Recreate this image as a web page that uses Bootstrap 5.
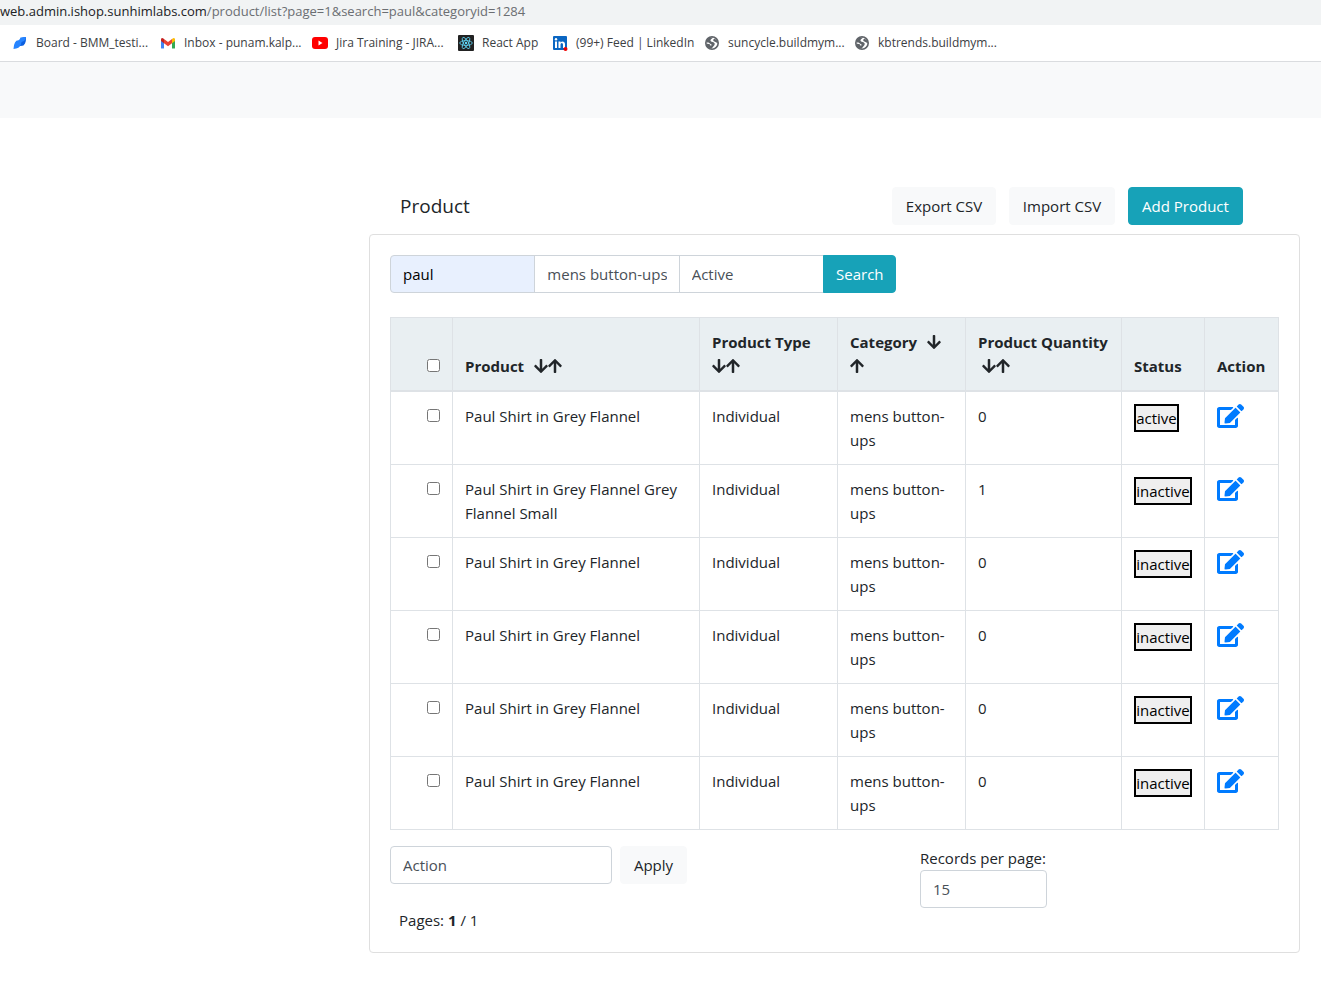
<!DOCTYPE html>
<html lang="en">
<head>
<meta charset="utf-8">
<meta name="viewport" content="width=device-width, initial-scale=1">
<title>Product list</title>
<link rel="stylesheet" href="https://cdn.jsdelivr.net/npm/bootstrap@5.3.0/dist/css/bootstrap.min.css">
<style>
body{font-family:"Open Sans","Noto Sans",sans-serif;font-size:15px;line-height:24px;color:#212529;background:#fff}
.address-bar{background:#f1f3f4;height:25px;font-size:13px;line-height:22px;color:#6b6e72;white-space:nowrap}
.address-bar span{color:#202124}
.bookmarks{display:grid;grid-template-columns:148px 152px 146px 94px 152px 150px 150px;height:37px;padding-left:12px;border-bottom:1px solid #dadcdf;align-items:center}
.bookmarks a{display:flex;align-items:center;gap:8px;color:#3c4043;font-size:12px;line-height:16px;text-decoration:none;white-space:nowrap}
.bookmarks svg{flex:none;width:16px;height:16px}
.top-strip{height:56px;background:#f8f9fa}
.shell{display:grid;grid-template-columns:28% minmax(0,1fr);padding:69px 21px 28px 7px}
.heading-row{padding:0 57px 9px 31px}
.heading-row h1{font-size:19px;line-height:24px;font-weight:400;margin:0}
.heading-tools{gap:13px}
.btn{font-size:15px;line-height:24px;height:38px;padding:6px 12px;border-radius:4px}
.btn-plain{background:#f8f9fa;border-color:#f8f9fa;color:#212529}
.btn-teal{background:#17a2b8;border-color:#17a2b8;color:#fff}
.btn-export{min-width:104px}.btn-import{min-width:106px}.btn-add{min-width:115px}
.panel{border:1px solid #dfdfdf;border-radius:4px;padding:20px}
.form-control{font-size:15px;line-height:24px;height:38px;padding:6px 12px;border-color:#ced4da;border-radius:4px;color:#495057}
.filters{max-width:506px;margin-bottom:24px}
.filters .btn{width:73px}
.filled,.filled:focus{background:#e8f0fe;color:#000}
.product-grid{table-layout:fixed;margin-bottom:16px;border-color:#dee2e6;color:#212529}
.product-grid th,.product-grid td{padding:12px;border:1px solid #dee2e6}
.product-grid thead th{background:#e9eff2;vertical-align:bottom;border-bottom:2px solid #dee2e6;font-weight:700;font-size:15px;white-space:nowrap}
.product-grid .tick{text-align:right}
.tick input{width:13px;height:13px;margin:0;vertical-align:0;display:inline-block}
.c-tick{width:62px}.c-type{width:138px}.c-cat{width:128px}.c-qty{width:156px}.c-status{width:83px}.c-action{width:74px}
.arrow{width:14px;height:16px;fill:currentColor;vertical-align:-2px;display:inline-block}
.arrow-after{margin-left:2px}
.state{border:2px solid #000;background:#efefef;color:#000;padding:0;height:28px;line-height:24px;width:58px;display:block;text-align:center;white-space:nowrap}
.state-on{width:45px}
.edit svg{display:block;width:27px;height:24px;fill:#007bff}
.bulk{gap:8px}
.bulk select{width:222px}
.bulk .btn{min-width:67px}
.records{width:127px;margin-right:232px;white-space:nowrap}
.pages{padding-left:9px}
</style>
<script src="https://cdn.jsdelivr.net/npm/bootstrap@5.3.0/dist/js/bootstrap.bundle.min.js"></script>
</head>
<body>
<svg class="d-none" aria-hidden="true">
<symbol id="down" viewBox="0 0 448 512"><path d="M413.1 222.5l22.2 22.2c9.4 9.4 9.4 24.6 0 33.9L241 473c-9.4 9.4-24.6 9.4-33.9 0L12.7 278.6c-9.4-9.4-9.4-24.6 0-33.9l22.2-22.2c9.5-9.5 25-9.3 34.3.4L184 343.4V56c0-13.3 10.7-24 24-24h32c13.3 0 24 10.7 24 24v287.4l114.8-120.5c9.3-9.8 24.8-10 34.3-.4z"/></symbol>
<symbol id="up" viewBox="0 0 448 512"><path d="M34.9 289.5l-22.2-22.2c-9.4-9.4-9.4-24.6 0-33.9L207 39c9.4-9.4 24.6-9.4 33.9 0l194.3 194.3c9.4 9.4 9.4 24.6 0 33.9L413 289.4c-9.5 9.5-25 9.3-34.3-.4L264 168.6V456c0 13.3-10.7 24-24 24h-32c-13.3 0-24-10.7-24-24V168.6L69.2 289.1c-9.3 9.8-24.8 10-34.3.4z"/></symbol>
<symbol id="edit" viewBox="0 0 576 512"><path d="M402.6 83.2l90.2 90.2c3.8 3.8 3.8 10 0 13.8L274.4 405.6l-92.8 10.3c-12.4 1.4-22.9-9.1-21.5-21.5l10.3-92.8L388.8 83.2c3.8-3.8 10-3.8 13.8 0zm162-22.9l-48.8-48.8c-15.2-15.2-39.9-15.2-55.2 0l-35.4 35.4c-3.8 3.8-3.8 10 0 13.8l90.2 90.2c3.8 3.8 10 3.8 13.8 0l35.4-35.4c15.2-15.3 15.2-40 0-55.2zM384 346.2V448H64V128h229.8c3.2 0 6.2-1.3 8.500-3.500l40-40c7.600-7.600 2.200-20.500-8.500-20.500H48C21.500 64 0 85.500 0 112v352c0 26.500 21.500 48 48 48h352c26.500 0 48-21.500 48-48V306.200c0-10.700-12.900-16-20.500-8.500l-40 40c-2.200 2.300-3.500 5.300-3.500 8.500z"/></symbol>
<symbol id="globe" viewBox="0 0 16 16"><circle cx="8" cy="8" r="6.200" fill="#fff" stroke="#5f6368" stroke-width="1.600"/><path d="M9.500 2.200L6.800 4.500Q6 5.500 7 6.500L9.500 7.300Q11.500 8.200 10.500 10L7.500 13.800Q2.200 13.500 2.200 8.600L5.800 9.200 6.500 10.800 8 10 4.500 7.500 2.200 7.500Q2.500 2 9.500 2.200zM10.500 3.500L13.800 6V8.500L12 7.200 9.800 6.200 9 5z" fill="#5f6368"/></symbol>
</svg>
<header>
<div class="address-bar"><div><span>web.admin.ishop.sunhimlabs.com</span>/product/list?page=1&amp;search=paul&amp;categoryid=1284</div></div>
<nav class="bookmarks" aria-label="Bookmarks">
<a href="#"><svg viewBox="0 0 16 16"><path d="M8 5.500Q8.500 2 14 2q.2 4-1 6.500Q12 11.300 8 11z" fill="#0c5fe0"/><path d="M1.500 14q0-4 1.500-6.500Q4 5.300 6.500 5.200 8 5 8.500 2.600 10 2 14 2 13.500 6 10 6.800 9 7.500 9 9.500 7.500 13.500 1.500 14z" fill="#2684ff"/></svg>Board - BMM_testi...</a>
<a href="#"><svg viewBox="0 0 16 16"><path d="M1 4v9q0 .5.500.5H4V6z" fill="#4285f4"/><path d="M12 6v7.500h2.500q.5 0 .5-.5V4z" fill="#34a853"/><path d="M12 4l1-.8q2-1 2 1.300V6l-3 2.200z" fill="#fbbc04"/><path d="M4 4L3 3.200q-2-1-2 1.300V6l3 2.200z" fill="#c5221f"/><path d="M4 4l4 3 4-3v4.200l-4 3-4-3z" fill="#ea4335"/></svg>Inbox - punam.kalp...</a>
<a href="#"><svg viewBox="0 0 16 16"><rect y="2" width="16" height="12" rx="3" fill="#f00"/><path d="M6.500 5.500v5l4-2.500z" fill="#fff"/></svg>Jira Training - JIRA...</a>
<a href="#"><svg viewBox="0 0 16 16"><rect width="16" height="16" rx="1" fill="#222"/><g fill="none" stroke="#61dafb" stroke-width=".8"><ellipse cx="8" cy="8" rx="6.300" ry="2.400"/><ellipse cx="8" cy="8" rx="6.300" ry="2.400" transform="rotate(60 8 8)"/><ellipse cx="8" cy="8" rx="6.300" ry="2.400" transform="rotate(120 8 8)"/></g><circle cx="8" cy="8" r="1.200" fill="#61dafb"/></svg>React App</a>
<a href="#"><svg viewBox="0 0 16 16"><rect x="1" y="1" width="14" height="14" rx="1" fill="#0a66c2"/><path d="M3 6.500h2V13H3zM6.500 6.500h2v1q2-2 4 0 .5.700.5 2V13h-2V9.500q0-1.500-1.200-1.500T8.500 9.500V13h-2z" fill="#fff"/><circle cx="4" cy="4.300" r="1.200" fill="#fff"/><circle cx="13.500" cy="14" r="2" fill="#e00"/></svg>(99+) Feed | LinkedIn</a>
<a href="#"><svg><use href="#globe"/></svg>suncycle.buildmym...</a>
<a href="#"><svg><use href="#globe"/></svg>kbtrends.buildmym...</a>
</nav>
<div class="top-strip"></div>
</header>
<div class="shell">
<aside></aside>
<main>
<div class="heading-row d-flex align-items-center justify-content-between">
<h1>Product</h1>
<div class="heading-tools d-flex">
<button type="button" class="btn btn-plain btn-export">Export CSV</button>
<button type="button" class="btn btn-plain btn-import">Import CSV</button>
<button type="button" class="btn btn-teal btn-add">Add Product</button>
</div>
</div>
<section class="panel">
<form class="filters input-group flex-nowrap">
<input class="form-control filled" type="text" value="paul" aria-label="Search text">
<select class="form-control" aria-label="Category"><option>mens button-ups</option></select>
<select class="form-control" aria-label="Status"><option>Active</option></select>
<button type="button" class="btn btn-teal">Search</button>
</form>
<table class="table product-grid">
<colgroup><col class="c-tick"><col><col class="c-type"><col class="c-cat"><col class="c-qty"><col class="c-status"><col class="c-action"></colgroup>
<thead><tr>
<th class="tick"><input type="checkbox" aria-label="Select all"></th>
<th>Product&nbsp; <svg class="arrow arrow-after"><use href="#down"/></svg><svg class="arrow"><use href="#up"/></svg></th>
<th>Product Type<br><svg class="arrow"><use href="#down"/></svg><svg class="arrow"><use href="#up"/></svg></th>
<th>Category&nbsp; <svg class="arrow arrow-after"><use href="#down"/></svg><br><svg class="arrow"><use href="#up"/></svg></th>
<th>Product Quantity<br>&nbsp;<svg class="arrow"><use href="#down"/></svg><svg class="arrow"><use href="#up"/></svg></th>
<th>Status</th><th>Action</th>
</tr></thead>
<tbody>
<tr><td class="tick"><input type="checkbox" aria-label="Select row 1"></td><td>Paul Shirt in Grey Flannel</td><td>Individual</td><td>mens button-<br>ups</td><td>0</td><td><button type="button" class="state state-on">active</button></td><td><a class="edit" href="#" aria-label="Edit"><svg><use href="#edit"/></svg></a></td></tr>
<tr><td class="tick"><input type="checkbox" aria-label="Select row 2"></td><td>Paul Shirt in Grey Flannel Grey Flannel Small</td><td>Individual</td><td>mens button-<br>ups</td><td>1</td><td><button type="button" class="state">inactive</button></td><td><a class="edit" href="#" aria-label="Edit"><svg><use href="#edit"/></svg></a></td></tr>
<tr><td class="tick"><input type="checkbox" aria-label="Select row 3"></td><td>Paul Shirt in Grey Flannel</td><td>Individual</td><td>mens button-<br>ups</td><td>0</td><td><button type="button" class="state">inactive</button></td><td><a class="edit" href="#" aria-label="Edit"><svg><use href="#edit"/></svg></a></td></tr>
<tr><td class="tick"><input type="checkbox" aria-label="Select row 4"></td><td>Paul Shirt in Grey Flannel</td><td>Individual</td><td>mens button-<br>ups</td><td>0</td><td><button type="button" class="state">inactive</button></td><td><a class="edit" href="#" aria-label="Edit"><svg><use href="#edit"/></svg></a></td></tr>
<tr><td class="tick"><input type="checkbox" aria-label="Select row 5"></td><td>Paul Shirt in Grey Flannel</td><td>Individual</td><td>mens button-<br>ups</td><td>0</td><td><button type="button" class="state">inactive</button></td><td><a class="edit" href="#" aria-label="Edit"><svg><use href="#edit"/></svg></a></td></tr>
<tr><td class="tick"><input type="checkbox" aria-label="Select row 6"></td><td>Paul Shirt in Grey Flannel</td><td>Individual</td><td>mens button-<br>ups</td><td>0</td><td><button type="button" class="state">inactive</button></td><td><a class="edit" href="#" aria-label="Edit"><svg><use href="#edit"/></svg></a></td></tr>
</tbody>
</table>
<div class="d-flex justify-content-between align-items-start">
<form class="bulk d-flex">
<select class="form-control" aria-label="Bulk action"><option>Action</option></select>
<button type="button" class="btn btn-plain">Apply</button>
</form>
<div class="records">
<label for="perPage">Records per page:</label>
<select id="perPage" class="form-control"><option>15</option></select>
</div>
</div>
<div class="pages">Pages: <strong>1</strong> / 1</div>
</section>
</main>
</div>
</body>
</html>
